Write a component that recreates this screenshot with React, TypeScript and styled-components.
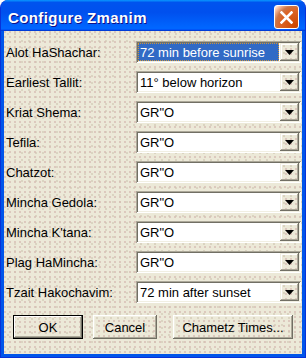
import React from 'react';
import styled, {createGlobalStyle} from 'styled-components';

const GlobalStyle = createGlobalStyle`
  html, body {
    margin: 0;
    padding: 0;
    background: #fff;
  }
  body {
    font-family: "Liberation Sans", Arial, sans-serif;
  }
`;

const dots = `
  background-color: #ece9d8;
  background-image:
    radial-gradient(circle at 1px 1px, rgba(214, 186, 178, 0.7) 0.7px, transparent 1px),
    radial-gradient(circle at 1px 1px, rgba(206, 196, 176, 0.6) 0.7px, transparent 1px);
  background-size: 5px 5px, 7px 7px;
  background-position: 0 0, 3px 2px;
`;

const Window = styled.div`
  display: flex;
  flex-direction: column;
  width: 306px;
  height: 358px;
  box-sizing: border-box;
  background: #0055ea;
  border: 1px solid #0831d9;
  border-top: none;
  border-radius: 8px 8px 0 0;
  overflow: hidden;
`;

const TitleBar = styled.div`
  display: flex;
  align-items: flex-start;
  justify-content: space-between;
  height: 31px;
  flex-shrink: 0;
  padding: 0 6px 0 7px;
  background: linear-gradient(180deg, #0997ff, #0053ee 8%, #0050ee 40%, #0066ff 88%, #0066ff 93%, #005bff 95%, #003dd7 96%, #003dd7);
`;

const Title = styled.div`
  margin-top: 10px;
  color: #fff;
  font-family: "Liberation Sans", Arial, sans-serif;
  font-weight: bold;
  font-size: 15px;
  line-height: 15px;
  letter-spacing: 0.4px;
  text-shadow: 1px 1px #0f1089;
`;

const CloseButton = styled.div`
  display: flex;
  align-items: center;
  justify-content: center;
  width: 25px;
  height: 24px;
  margin-top: 5px;
  box-sizing: border-box;
  border: 1px solid #fff;
  border-radius: 3px;
  background: radial-gradient(circle at 90% 90%, #cc4600 0%, #dc6527 55%, #cd7546 70%, #ffccb2 90%, #fff 100%);
`;

const Client = styled.div`
  flex: 1;
  display: flex;
  flex-direction: column;
  margin: 0 3px 3px;
  padding: 10px 1px 0 2px;
  ${dots}
`;

const Form = styled.div`
  display: flex;
  flex-direction: column;
  gap: 8px;
`;

const Row = styled.div`
  display: flex;
  align-items: center;
  height: 22px;
`;

const Label = styled.div`
  width: 130px;
  flex-shrink: 0;
  font-size: 13px;
  color: #000;
`;

const Combo = styled.div`
  flex: 1;
  display: flex;
  height: 22px;
  box-sizing: border-box;
  padding: 2px;
  background: #fff;
  box-shadow: inset 1px 1px #aca899, inset -1px -1px #fff, inset 2px 2px #716f64, inset -2px -2px #f1efe2;
`;

const ComboText = styled.div<{$selected?: boolean}>`
  flex: 1;
  display: flex;
  align-items: center;
  box-sizing: border-box;
  padding-left: 1px;
  margin-right: 1px;
  font-size: 13px;
  white-space: nowrap;
  border: 1px ${(p) => (p.$selected ? 'dotted #ce953a' : 'solid transparent')};
  background: ${(p) => (p.$selected ? '#316ac5' : 'transparent')};
  color: ${(p) => (p.$selected ? '#fff' : '#000')};
`;

const DropButton = styled.div`
  display: flex;
  align-items: center;
  justify-content: center;
  width: 19px;
  height: 18px;
  ${dots}
  box-shadow: inset -1px -1px #716f64, inset 1px 1px #f1efe2, inset -2px -2px #aca899, inset 2px 2px #fff;
`;

const Button = styled.div<{$w: number; $ml?: number; $default?: boolean}>`
  display: flex;
  align-items: center;
  justify-content: center;
  width: ${(p) => p.$w}px;
  height: 24px;
  margin-left: ${(p) => p.$ml ?? 0}px;
  box-sizing: border-box;
  font-size: 13px;
  color: #000;
  ${dots}
  border: ${(p) => (p.$default ? '1px solid #000' : 'none')};
  box-shadow: ${(p) =>
    p.$default
      ? 'inset -1px -1px #716f64, inset 1px 1px #fff, inset -2px -2px #aca899'
      : 'inset -1px -1px #716f64, inset 1px 1px #fff, inset -2px -2px #aca899, inset 2px 2px #f1efe2'};
`;

const ButtonRow = styled.div`
  display: flex;
  margin-top: 12px;
  padding-left: 7px;
`;

const rows = [
  {label: 'Alot HaShachar:', value: '72 min before sunrise', selected: true},
  {label: 'Earliest Tallit:', value: '11° below horizon'},
  {label: 'Kriat Shema:', value: 'GR"O'},
  {label: 'Tefila:', value: 'GR"O'},
  {label: 'Chatzot:', value: 'GR"O'},
  {label: 'Mincha Gedola:', value: 'GR"O'},
  {label: "Mincha K'tana:", value: 'GR"O'},
  {label: 'Plag HaMincha:', value: 'GR"O'},
  {label: 'Tzait Hakochavim:', value: '72 min after sunset'},
];

const App = () => {
  return (
    <>
      <GlobalStyle />
      <Window>
        <TitleBar>
          <Title>Configure Zmanim</Title>
          <CloseButton>
            <svg width="13" height="13" viewBox="0 0 13 13">
              <path d="M1.5 1.5 L11.5 11.5 M11.5 1.5 L1.5 11.5" stroke="#fff" strokeWidth="2.6" strokeLinecap="square" />
            </svg>
          </CloseButton>
        </TitleBar>

        <Client>
          <Form>
            {rows.map((row) => (
              <Row key={row.label}>
                <Label>{row.label}</Label>
                <Combo>
                  <ComboText $selected={row.selected}>{row.value}</ComboText>
                  <DropButton>
                    <svg width="9" height="5" viewBox="0 0 9 5">
                      <polygon points="0,0 9,0 4.5,5" fill="#000" />
                    </svg>
                  </DropButton>
                </Combo>
              </Row>
            ))}
          </Form>

          <ButtonRow>
            <Button $w={70} $default>OK</Button>
            <Button $w={64} $ml={10}>Cancel</Button>
            <Button $w={120} $ml={16}>Chametz Times...</Button>
          </ButtonRow>
        </Client>
      </Window>
    </>
  );
};

export default App;
